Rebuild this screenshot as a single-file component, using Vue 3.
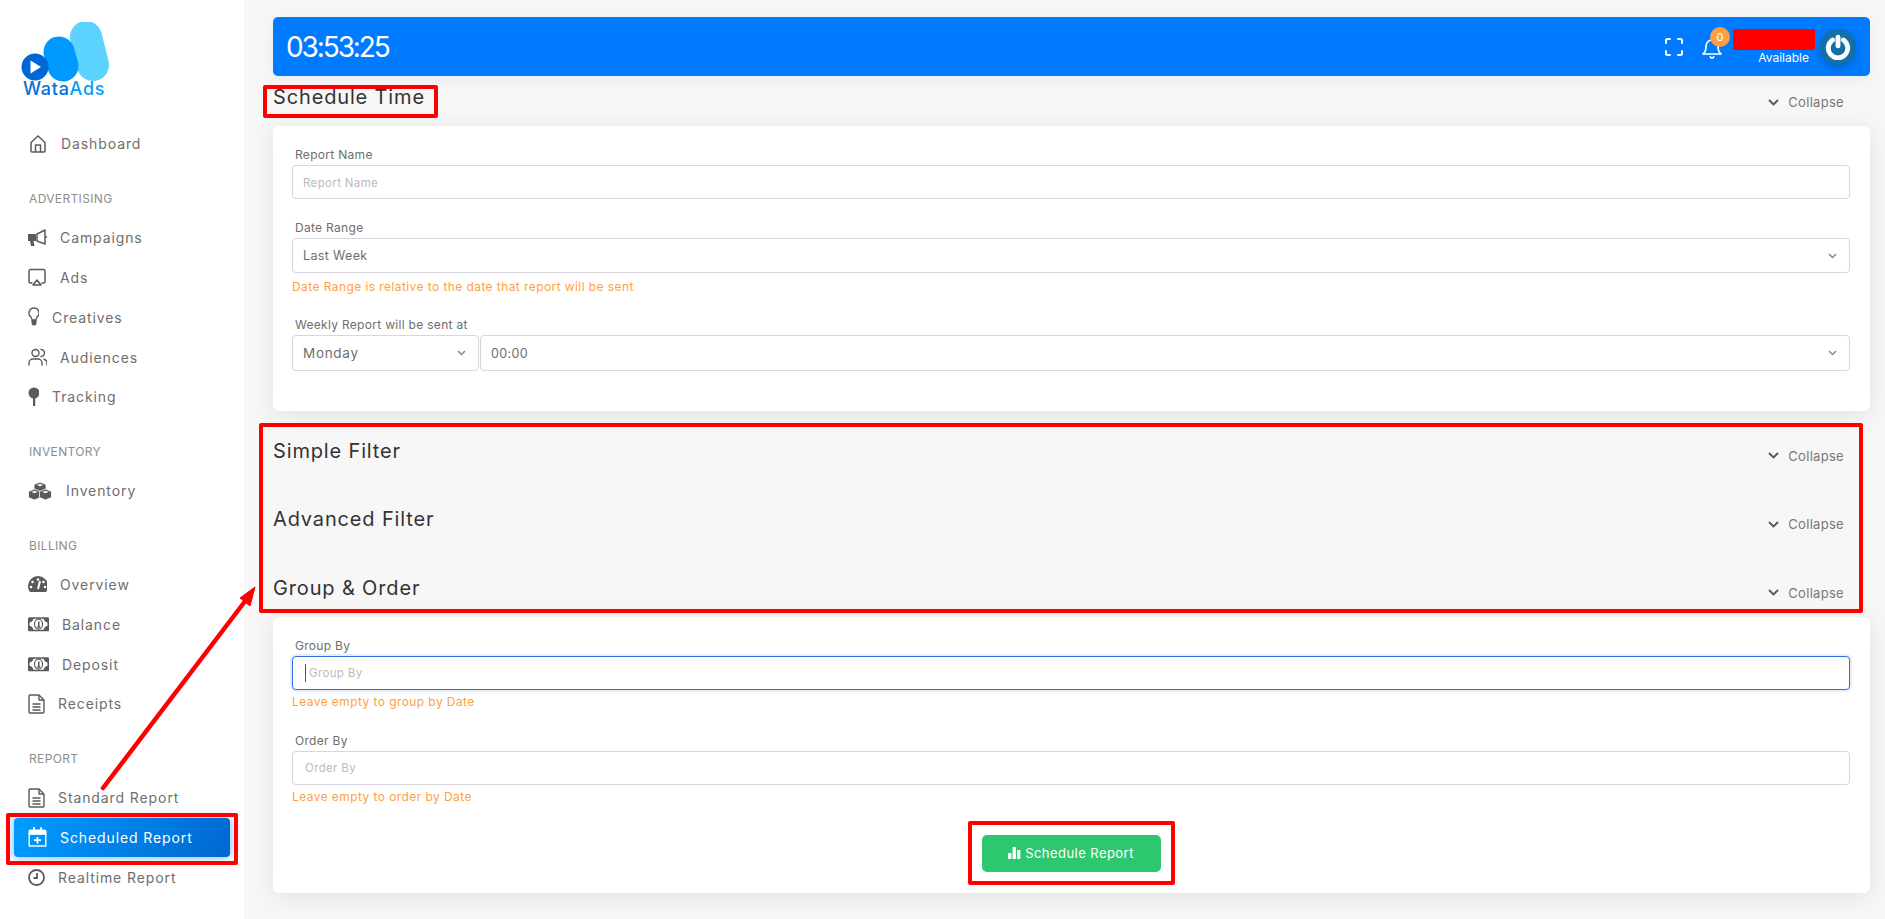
<template>
  <div class="layout">
    <aside class="sidebar">
      <div class="logo">
        <svg width="90" height="60" viewBox="0 0 90 60">
          <line x1="66" y1="15" x2="73" y2="43" stroke="#5cd2ff" stroke-width="32" stroke-linecap="round" />
          <line x1="39" y1="30" x2="43" y2="44" stroke="#0099ff" stroke-width="31" stroke-linecap="round" />
          <circle cx="15" cy="45" r="13.5" fill="#0068d6" />
          <path d="M10.5 38.5 L21 45 L10.5 51.5 Z" fill="#fff" />
        </svg>
        <div class="logo-text">Wata<span>Ads</span></div>
      </div>

      <nav class="nav">
        <template v-for="group in groups" :key="group.title">
          <div v-if="group.title" class="nav-title">{{ group.title }}</div>
          <a
            v-for="item in group.items"
            :key="item.label"
            class="nav-item"
            :class="{ active: item.active }"
          >
            <svg class="nav-icon" :width="item.w" height="20" :viewBox="`0 0 ${item.w} 20`" v-html="item.icon"></svg>
            <span>{{ item.label }}</span>
          </a>
        </template>
      </nav>
    </aside>

    <main class="content">
      <header class="topbar">
        <div class="clock">03:53:25</div>
        <div class="topbar-right">
          <svg class="expand" width="18" height="18" viewBox="0 0 18 18" fill="none" stroke="#fff" stroke-width="2" stroke-linecap="round" stroke-linejoin="round">
            <path d="M1 5V2.5A1.5 1.5 0 0 1 2.500 1H5M13 1h2.500A1.500 1.500 0 0 1 17 2.500V5M17 13v2.500a1.500 1.500 0 0 1-1.500 1.500H13M5 17H2.500A1.500 1.500 0 0 1 1 15.500V13" />
          </svg>
          <div class="bell">
            <svg width="20" height="21" viewBox="0 0 20 21" fill="none" stroke="#fff" stroke-width="1.700" stroke-linecap="round" stroke-linejoin="round">
              <path d="M16 8A6 6 0 0 0 4 8c0 6-3 8-3 8h18s-3-2-3-8" />
              <path d="M11.700 19a2 2 0 0 1-3.400 0" />
            </svg>
            <span class="badge">0</span>
          </div>
          <div class="user">
            <div class="user-name"></div>
            <div class="user-status">Available</div>
          </div>
          <div class="avatar">
            <svg width="26" height="26" viewBox="0 0 24 24" fill="none" stroke="#fff" stroke-width="4.500" stroke-linecap="round">
              <path d="M7 5.500a9 9 0 1 0 10 0" />
              <path d="M12 3v8" />
            </svg>
          </div>
        </div>
      </header>

      <section class="panel">
        <div class="panel-head">
          <h2>Schedule Time</h2>
          <a class="collapse"><svg width="11" height="7" viewBox="0 0 11 7" fill="none" stroke="#555" stroke-width="1.800"><path d="M1 1l4.500 4.500L10 1" /></svg>Collapse</a>
        </div>
        <div class="card card-time">
          <label class="field-label">Report Name</label>
          <input class="field" type="text" placeholder="Report Name" />

          <label class="field-label gap">Date Range</label>
          <div class="select-wrap">
            <select class="field select">
              <option>Last Week</option>
            </select>
            <svg class="chev" width="9" height="6" viewBox="0 0 9 6" fill="none" stroke="#888" stroke-width="1.500"><path d="M1 1l3.500 3.500L8 1" /></svg>
          </div>
          <p class="hint wide">Date Range is relative to the date that report will be sent</p>

          <label class="field-label gap">Weekly Report will be sent at</label>
          <div class="week-row">
            <div class="select-wrap day">
              <select class="field select tall">
                <option>Monday</option>
              </select>
              <svg class="chev" width="9" height="6" viewBox="0 0 9 6" fill="none" stroke="#888" stroke-width="1.500"><path d="M1 1l3.500 3.500L8 1" /></svg>
            </div>
            <div class="select-wrap hour">
              <select class="field select tall">
                <option>00:00</option>
              </select>
              <svg class="chev" width="9" height="6" viewBox="0 0 9 6" fill="none" stroke="#888" stroke-width="1.500"><path d="M1 1l3.500 3.500L8 1" /></svg>
            </div>
          </div>
        </div>
      </section>

      <section v-for="title in ['Simple Filter', 'Advanced Filter']" :key="title" class="panel">
        <div class="panel-head">
          <h2>{{ title }}</h2>
          <a class="collapse"><svg width="11" height="7" viewBox="0 0 11 7" fill="none" stroke="#555" stroke-width="1.800"><path d="M1 1l4.500 4.500L10 1" /></svg>Collapse</a>
        </div>
      </section>

      <section class="panel">
        <div class="panel-head">
          <h2>Group &amp; Order</h2>
          <a class="collapse"><svg width="11" height="7" viewBox="0 0 11 7" fill="none" stroke="#555" stroke-width="1.800"><path d="M1 1l4.500 4.500L10 1" /></svg>Collapse</a>
        </div>
        <div class="card card-group">
          <label class="field-label">Group By</label>
          <div class="select-wrap">
            <input class="field focused" type="text" placeholder="Group By" />
            <span class="caret"></span>
          </div>
          <p class="hint">Leave empty to group by Date</p>

          <label class="field-label gap order-label">Order By</label>
          <input class="field order" type="text" placeholder="Order By" />
          <p class="hint">Leave empty to order by Date</p>

          <div class="actions">
            <button class="submit" type="button">
              <svg width="13" height="12" viewBox="0 0 13 12" fill="#fff">
                <rect x="0" y="6" width="3.400" height="6" rx="0.800" />
                <rect x="4.500" y="0" width="3.400" height="12" rx="0.800" />
                <rect x="9" y="3" width="3.400" height="9" rx="0.800" />
              </svg>
              Schedule Report
            </button>
          </div>
        </div>
      </section>
    </main>

    <!-- red annotations drawn on top of the screenshot -->
    <div class="mark mark-nav"></div>
    <div class="mark mark-time"></div>
    <div class="mark mark-filters"></div>
    <div class="mark mark-button"></div>
    <svg class="arrow" width="300" height="300" viewBox="0 0 300 300">
      <line x1="103" y1="288" x2="246" y2="100" stroke="#f00" stroke-width="4.500" stroke-linecap="round" />
      <path d="M255 87 L240 98 L250 106 Z" fill="#f00" stroke="#f00" stroke-width="1" />
    </svg>
  </div>
</template>

<script setup>
const grey = '#5a5a5a'

const home = `<g transform="translate(2 0)" fill="none" stroke="${grey}" stroke-width="1.500" stroke-linejoin="round"><path d="M1 8.500 L8 2 L15 8.500 V17 a1 1 0 0 1-1 1 H2 a1 1 0 0 1-1-1 Z"/><path d="M5.500 18 V11 H10.500 V18"/></g>`
const bullhorn = `<path fill="${grey}" d="M0 6 H8 L8 13 H5.500 L6.500 18 H3 L2 13 H0 Z"/><path fill="none" stroke="${grey}" stroke-width="1.500" stroke-linejoin="round" d="M9 6 L17 2 V16 L9 13 Z"/><path stroke="${grey}" stroke-width="1.500" d="M17 9 H19"/>`
const airplay = `<path fill="none" stroke="${grey}" stroke-width="1.500" stroke-linecap="round" d="M4 16 H2.500 A1.500 1.500 0 0 1 1 14.500 V4 A1.500 1.500 0 0 1 2.500 2.500 H15.500 A1.500 1.500 0 0 1 17 4 V14.500 A1.500 1.500 0 0 1 15.500 16 H14"/><path fill="none" stroke="${grey}" stroke-width="1.500" stroke-linejoin="round" d="M9 13 L13 18 H5 Z"/>`
const bulb = `<path fill="none" stroke="${grey}" stroke-width="1.400" d="M6 1 A5 5 0 0 0 3 10 C3.500 11 4 12 4 13 H8 C8 12 8.500 11 9 10 A5 5 0 0 0 6 1 Z"/><path fill="${grey}" d="M3.500 13 H8.500 V16 A2.500 2.500 0 0 1 3.500 16 Z"/>`
const users = `<g fill="none" stroke="${grey}" stroke-width="1.400" stroke-linecap="round"><path d="M1 18 V16 A4 4 0 0 1 5 12 H10 A4 4 0 0 1 14 16 V18"/><circle cx="7.500" cy="6" r="3.500"/><path d="M19 18 V16 A4 4 0 0 0 16 12.200"/><path d="M13 2.500 A3.500 3.500 0 0 1 13 9.500"/></g>`
const pin = `<circle cx="6" cy="6" r="5.500" fill="${grey}"/><rect x="5" y="10" width="2.200" height="9" fill="${grey}"/>`
const cubes = `<g fill="${grey}" stroke="#fff" stroke-width="0.800" stroke-linejoin="round"><path d="M12 1 L18 3.500 V9.500 L12 12 L6 9.500 V3.500 Z"/><path d="M6.500 8 L12.500 10.500 V16.500 L6.500 19 L0.500 16.500 V10.500 Z"/><path d="M17.500 8 L23.500 10.500 V16.500 L17.500 19 L11.500 16.500 V10.500 Z"/></g><g fill="#fff"><path d="M9 4 L12 2.800 L15 4 L12 5.200 Z"/><path d="M3.500 11 L6.500 9.800 L9.500 11 L6.500 12.200 Z"/><path d="M14.500 11 L17.500 9.800 L20.500 11 L17.500 12.200 Z"/></g>`
const gauge = `<path fill="${grey}" d="M10 2 A10 10 0 0 0 0 12 C0 14.500 0.800 16.500 2 18 H18 C19.200 16.500 20 14.500 20 12 A10 10 0 0 0 10 2 Z"/><circle cx="10" cy="5.500" r="1.300" fill="#fff"/><circle cx="4.500" cy="8" r="1.300" fill="#fff"/><circle cx="15.500" cy="8" r="1.300" fill="#fff"/><circle cx="3" cy="13" r="1.300" fill="#fff"/><circle cx="17" cy="13" r="1.300" fill="#fff"/><path stroke="#fff" stroke-width="2" d="M12 7 L10 15"/>`
const bill = `<rect x="0.800" y="4" width="19.500" height="12.500" rx="0.800" fill="none" stroke="${grey}" stroke-width="1.600"/><path fill="${grey}" d="M0.800 4 H5.500 A4.700 4.700 0 0 1 0.800 8.700 Z M20.300 4 H15.500 A4.800 4.800 0 0 0 20.300 8.700 Z M0.800 16.500 H5.500 A4.700 4.700 0 0 0 0.800 11.800 Z M20.300 16.500 H15.500 A4.800 4.800 0 0 1 20.300 11.800 Z"/><ellipse cx="10.500" cy="10.200" rx="4" ry="5" fill="none" stroke="${grey}" stroke-width="1.200"/><path stroke="${grey}" stroke-width="1.500" d="M10.800 7.500 V13 M9.200 13 H12.300"/>`
const file = `<g fill="none" stroke="${grey}" stroke-width="1.400" stroke-linejoin="round"><path d="M1 2 A1 1 0 0 1 2 1 H11 L16 6 V18 A1 1 0 0 1 15 19 H2 A1 1 0 0 1 1 18 Z"/><path d="M11 1 V6 H16"/><path d="M4.500 10 H12.500 M4.500 13 H12.500 M4.500 16 H12.500"/></g>`
const calendar = `<path fill="#fff" d="M3 2.500 H5 V1 A1 1 0 0 1 7 1 V2.500 H12 V1 A1 1 0 0 1 14 1 V2.500 H16.500 A2 2 0 0 1 18.500 4.500 V7.500 H0.500 V4.500 A2 2 0 0 1 3 2.500 Z"/><rect x="1.200" y="7" width="16.600" height="12" fill="none" stroke="#fff" stroke-width="1.400"/><path stroke="#fff" stroke-width="1.800" d="M9.500 10 V16.500 M6 13.200 H13"/>`
const clock = `<circle cx="8.500" cy="10.500" r="7.500" fill="none" stroke="${grey}" stroke-width="1.800"/><path fill="none" stroke="${grey}" stroke-width="1.800" d="M9 6 V11 H5.500"/>`

const groups = [
  { title: '', items: [{ label: 'Dashboard', w: 20, icon: home }] },
  {
    title: 'ADVERTISING',
    items: [
      { label: 'Campaigns', w: 19, icon: bullhorn },
      { label: 'Ads', w: 19, icon: airplay },
      { label: 'Creatives', w: 11, icon: bulb },
      { label: 'Audiences', w: 19, icon: users },
      { label: 'Tracking', w: 11, icon: pin }
    ]
  },
  { title: 'INVENTORY', items: [{ label: 'Inventory', w: 25, icon: cubes }] },
  {
    title: 'BILLING',
    items: [
      { label: 'Overview', w: 19, icon: gauge },
      { label: 'Balance', w: 21, icon: bill },
      { label: 'Deposit', w: 21, icon: bill },
      { label: 'Receipts', w: 17, icon: file }
    ]
  },
  {
    title: 'REPORT',
    items: [
      { label: 'Standard Report', w: 17, icon: file },
      { label: 'Scheduled Report', w: 19, icon: calendar, active: true },
      { label: 'Realtime Report', w: 17, icon: clock }
    ]
  }
]
</script>

<style>
html,
body {
  background: #f7f7f7;
}
</style>

<style scoped>
.layout {
  position: relative;
  display: flex;
  min-height: 919px;
  font-family: Inter, "Liberation Sans", sans-serif;
  color: #555;
}

.sidebar {
  width: 244px;
  flex-shrink: 0;
  background: #fff;
}

.logo {
  padding: 22px 0 0 20px;
  height: 124px;
  box-sizing: border-box;
}
.logo svg {
  display: block;
}
.logo-text {
  margin-top: -1px;
  padding-left: 3px;
  font-size: 18px;
  line-height: 16px;
  font-weight: 500;
  letter-spacing: 0.7px;
  color: #0070d9;
}
.logo-text span {
  color: #0a9cf5;
}

.nav-title {
  height: 19px;
  margin: 25px 0 10px 29px;
  font-size: 12px;
  line-height: 19px;
  letter-spacing: 0.35px;
  color: #8d8d8d;
}

.nav-item {
  display: flex;
  align-items: center;
  gap: 13px;
  height: 39.800px;
  margin: 0 14px;
  padding-left: 14px;
  font-size: 14px;
  letter-spacing: 0.9px;
  color: #6e6e6e;
}
.nav-item.active {
  color: #fff;
  border-radius: 4px;
  background: linear-gradient(118deg, #009dff, #0067cf);
  box-shadow: 0 0 10px 1px rgba(0, 123, 255, 0.5);
}
.nav-icon {
  flex-shrink: 0;
}

.content {
  flex: 1;
  min-width: 0;
  padding: 17px 15px 0 29px;
}

.topbar {
  display: flex;
  align-items: center;
  justify-content: space-between;
  height: 59px;
  padding: 0 14px 0 13px;
  border-radius: 5px;
  background: #007bff;
  box-shadow: 0 4px 20px rgba(0, 0, 0, 0.05);
}
.clock {
  font-size: 28px;
  letter-spacing: -2.100px;
  color: #fff;
}
.topbar-right {
  display: flex;
  align-items: center;
}
.expand {
  margin-right: 19px;
}
.bell {
  position: relative;
  display: flex;
  margin-right: 11px;
  padding-top: 3px;
}
.badge {
  position: absolute;
  top: -8px;
  right: -8px;
  width: 20px;
  height: 20px;
  border-radius: 50%;
  background: #ff9f43;
  font-size: 11px;
  line-height: 20px;
  text-align: center;
  color: #fff;
}
.user {
  width: 82px;
  margin-right: 5px;
}
.user-name {
  height: 21px;
  margin-top: 1px;
  border-radius: 2px;
  background: #f00;
}
.user-status {
  padding-right: 6px;
  font-size: 12px;
  line-height: 16px;
  text-align: right;
  color: #fff;
}
.avatar {
  display: flex;
  align-items: center;
  justify-content: center;
  width: 36px;
  height: 36px;
  border-radius: 50%;
  background: #1270a8;
  box-shadow: 0 3px 8px rgba(0, 0, 0, 0.2);
}

.panel {
  margin-bottom: 18.500px;
}
.panel-head {
  display: flex;
  justify-content: space-between;
  height: 50px;
  padding-right: 26px;
}
.panel-head h2 {
  margin: 0;
  font-size: 20px;
  font-weight: 400;
  line-height: 42px;
  letter-spacing: 0.85px;
  color: #333;
}
.collapse {
  display: flex;
  align-items: center;
  gap: 9px;
  height: 18px;
  margin-top: 17px;
  font-size: 13px;
  letter-spacing: 0.3px;
  color: #777;
}

.card {
  box-sizing: border-box;
  padding: 20px 20px 0 19px;
  border-radius: 6px;
  background: #fff;
  box-shadow: 0 4px 24px rgba(34, 41, 47, 0.1);
}
.card-time {
  height: 285px;
}
.card-group {
  height: 276px;
}

.field-label {
  display: block;
  height: 19px;
  padding-left: 3px;
  font-size: 12px;
  line-height: 18px;
  letter-spacing: 0.3px;
  color: #6e6e6e;
}
.field-label.gap {
  margin-top: 20px;
}
.field-label.order-label {
  margin-top: 21px;
}

.field {
  display: block;
  box-sizing: border-box;
  width: 100%;
  height: 34px;
  padding: 0 10px;
  border: 1px solid #d8d6de;
  border-radius: 4px;
  background: #fff;
  font-family: inherit;
  font-size: 12.500px;
  letter-spacing: 0.35px;
  color: #6e6e6e;
  outline: none;
}
.field::placeholder {
  font-size: 11.500px;
  letter-spacing: 0.35px;
  color: #bbb;
}
.field.order {
  padding-left: 12px;
}
.field.focused {
  padding-left: 16px;
  border-color: #2f6fe0;
  box-shadow: 0 0 0 2px rgba(47, 111, 224, 0.12);
}
.select {
  height: 35px;
  appearance: none;
}
.select.tall {
  height: 36px;
}
.day .select {
  font-size: 13.500px;
  letter-spacing: 0.7px;
}

.select-wrap {
  position: relative;
}
.chev {
  position: absolute;
  top: 50%;
  right: 13px;
  margin-top: -3px;
  pointer-events: none;
}
.caret {
  position: absolute;
  top: 8px;
  left: 13px;
  width: 1px;
  height: 18px;
  background: #555;
}

.hint {
  margin: 3px 0 0;
  font-size: 12px;
  line-height: 18px;
  letter-spacing: 0.42px;
  color: #ff9f43;
}
.hint.wide {
  margin-top: 5px;
}

.week-row {
  display: flex;
  gap: 1px;
}
.day {
  width: 187px;
  flex-shrink: 0;
}
.hour {
  flex: 1;
}

.actions {
  display: flex;
  justify-content: center;
  margin-top: 29px;
}
.submit {
  display: flex;
  align-items: center;
  justify-content: center;
  gap: 4px;
  width: 179px;
  height: 37px;
  border: 0;
  border-radius: 5px;
  background: #2dc76f;
  font-family: inherit;
  font-size: 13px;
  letter-spacing: 0.45px;
  color: #fff;
}

.mark {
  position: absolute;
  box-sizing: border-box;
  border: 4px solid #f00;
  border-radius: 2px;
  pointer-events: none;
}
.mark-nav {
  left: 6px;
  top: 813px;
  width: 232px;
  height: 52px;
}
.mark-time {
  left: 263px;
  top: 85px;
  width: 175px;
  height: 33px;
}
.mark-filters {
  left: 259px;
  top: 423px;
  width: 1604px;
  height: 190px;
}
.mark-button {
  left: 968px;
  top: 821px;
  width: 207px;
  height: 64px;
}
.arrow {
  position: absolute;
  left: 0;
  top: 500px;
  pointer-events: none;
}
</style>
